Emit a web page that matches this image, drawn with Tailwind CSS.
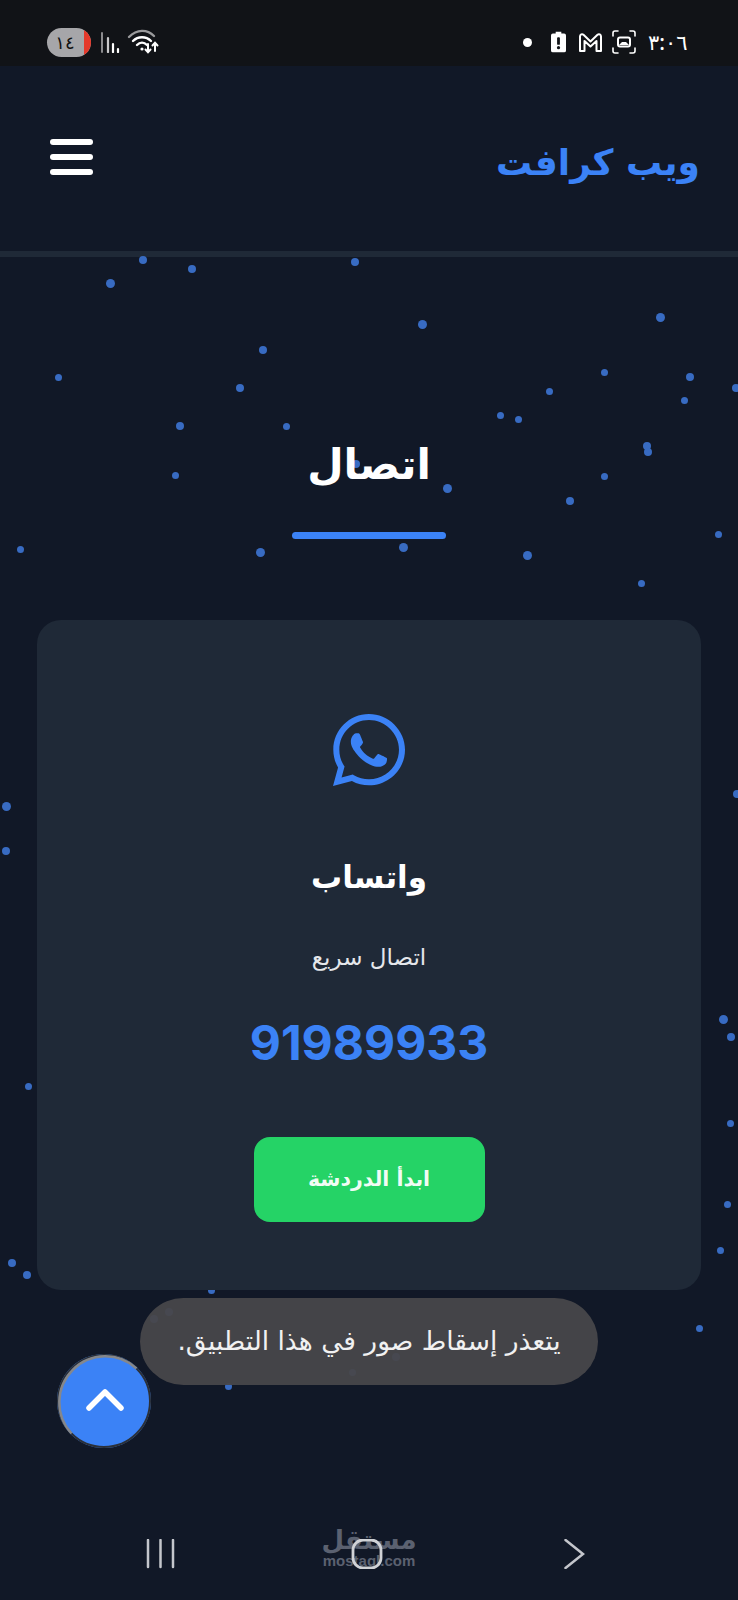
<!DOCTYPE html>
<html lang="ar" dir="rtl">
<head>
  <meta charset="UTF-8" />
  <meta name="viewport" content="width=device-width, initial-scale=1.0" />
  <title>ويب كرافت</title>
  <script src="https://cdn.jsdelivr.net/npm/@tailwindcss/browser@4"></script>
</head>
<body class="bg-[#111827] font-['DejaVu_Sans',sans-serif] text-white">
  <div class="relative w-[738px] h-[1600px] overflow-hidden flex flex-col">

    <!-- Status bar -->
    <div dir="ltr" class="h-[66px] shrink-0 bg-[#111317] flex items-center justify-between pl-[47px] pr-[48px] pt-[18px]">
      <div class="flex items-center">
        <div class="relative w-[44px] h-[29px] rounded-full bg-[#a6a6a9] overflow-hidden flex items-center justify-center pr-[8px]">
          <span class="text-[18px] leading-none text-[#111] font-['Noto_Sans','DejaVu_Sans',sans-serif]">١٤</span>
          <div class="absolute right-0 top-0 bottom-0 w-[7px] bg-[#e5392b]"></div>
        </div>
        <svg class="ml-[9px]" width="20" height="22" viewBox="0 0 20 22" fill="none" stroke-linecap="round">
          <path d="M2 2v19" stroke="#8b8b8e" stroke-width="2"/>
          <path d="M8 7v14" stroke="#c9c9cb" stroke-width="2.2"/>
          <path d="M13 13v8" stroke="#fff" stroke-width="2.2"/>
          <path d="M18 18v3" stroke="#fff" stroke-width="2.2"/>
        </svg>
        <svg class="ml-[7px]" width="34" height="26" viewBox="0 0 34 26" fill="none" stroke-linecap="round">
          <path d="M2 8C10 0 20 0 27 7" stroke="#9a9a9c" stroke-width="2.4"/>
          <path d="M6 12C11 7 19 7 24 12" stroke="#fff" stroke-width="2.4"/>
          <path d="M10 16C13 13 17 13 20 16" stroke="#fff" stroke-width="2.4"/>
          <circle cx="15" cy="20" r="1.6" fill="#fff"/>
          <path d="M21 15v8M18.5 20.5l2.5 2.8 2.5-2.8" stroke="#fff" stroke-width="2"/>
          <path d="M28 22v-8M25.5 16.5l2.5-2.8 2.5 2.8" stroke="#fff" stroke-width="2"/>
        </svg>
      </div>
      <div class="flex items-center">
        <div class="w-[9px] h-[9px] rounded-full bg-white"></div>
        <svg class="ml-[19px]" width="15" height="22" viewBox="0 0 16 22">
          <path d="M5 0h6v2h3a2 2 0 0 1 2 2v16a2 2 0 0 1-2 2H2a2 2 0 0 1-2-2V4a2 2 0 0 1 2-2h3z" fill="#fff"/>
          <rect x="6.5" y="6" width="3" height="8" rx="1" fill="#111317"/>
          <circle cx="8" cy="17" r="1.7" fill="#111317"/>
        </svg>
        <svg class="ml-[12px]" width="25" height="21" viewBox="0 0 25 21" fill="none">
          <path d="M2 19V4.500C2 2.500 4 1.500 5.500 2.800L12.500 9.500L19.500 2.800C21 1.500 23 2.500 23 4.500V19H18.500V9L12.500 14.500L6.500 9V19Z" stroke="#fff" stroke-width="2" stroke-linejoin="round"/>
        </svg>
        <svg class="ml-[9px]" width="24" height="24" viewBox="0 0 24 24" fill="none" stroke="#fff" stroke-linecap="round">
          <path d="M1 6V3a2 2 0 0 1 2-2h3M18 1h3a2 2 0 0 1 2 2v3M23 18v3a2 2 0 0 1-2 2h-3M6 23H3a2 2 0 0 1-2-2v-3" stroke-width="1.6"/>
          <rect x="6" y="7.500" width="12" height="9" rx="2" stroke-width="2"/>
          <path d="M7 15l3-3h4l3 3z" fill="#fff" stroke="none"/>
        </svg>
        <span class="ml-[12px] w-[42px] text-[21px] leading-none font-['Noto_Sans','DejaVu_Sans',sans-serif] font-medium">٣:٠٦</span>
      </div>
    </div>

    <!-- Header -->
    <header class="h-[191px] shrink-0 border-b-[6px] border-[#1f2937] flex items-center justify-between pr-[38px] pl-[50px] pb-[3px]">
      <a class="mt-[11px] text-[36px] leading-none font-bold text-[#3b82f6]">ويب كرافت</a>
      <div class="flex flex-col gap-[9px]">
        <span class="block w-[43px] h-[6px] rounded-full bg-white"></span>
        <span class="block w-[43px] h-[6px] rounded-full bg-white"></span>
        <span class="block w-[43px] h-[6px] rounded-full bg-white"></span>
      </div>
    </header>

    <!-- Floating particles sit behind the content -->
    <div id="particles" class="absolute inset-0"></div>

    <main class="relative flex-1 flex flex-col items-center pt-[178px]">
      <h1 class="text-[42px] leading-[60px] font-bold text-white">اتصال</h1>
      <div class="w-[154px] h-[7px] rounded-full bg-[#3b82f6] mt-[37px]"></div>

      <section class="mt-[81px] w-[664px] h-[670px] rounded-[24px] bg-[#1f2937] flex flex-col items-center pt-[94px]">
        <svg class="w-[72px] h-[72px]" viewBox="0 32 448 448" fill="#3b82f6">
          <path d="M380.9 97.1C339 55.1 283.2 32 223.9 32c-122.4 0-222 99.6-222 222 0 39.1 10.2 77.3 29.6 111L0 480l117.7-30.9c32.4 17.7 68.9 27 106.1 27h.1c122.3 0 224.1-99.6 224.1-222 0-59.3-25.2-115-67.1-157zm-157 341.6c-33.2 0-65.7-8.9-94-25.7l-6.7-4-69.8 18.3L72 359.2l-4.4-7c-18.5-29.4-28.2-63.3-28.2-98.2 0-101.7 82.8-184.5 184.6-184.5 49.3 0 95.6 19.2 130.4 54.1 34.8 34.9 56.2 81.2 56.1 130.5 0 101.8-84.9 184.6-186.6 184.6zm101.2-138.2c-5.5-2.8-32.8-16.2-37.9-18-5.1-1.9-8.8-2.8-12.5 2.8-3.7 5.6-14.3 18-17.6 21.8-3.2 3.7-6.5 4.2-12 1.4-32.6-16.3-54-29.1-75.5-66-5.7-9.8 5.7-9.1 16.3-30.3 1.8-3.7.9-6.9-.5-9.7-1.4-2.8-12.5-30.1-17.1-41.2-4.5-10.8-9.1-9.3-12.5-9.5-3.2-.2-6.9-.2-10.6-.2-3.7 0-9.7 1.4-14.8 6.9-5.1 5.6-19.4 19-19.4 46.3 0 27.3 19.9 53.7 22.6 57.4 2.8 3.7 39.1 59.7 94.8 83.8 35.2 15.2 49 16.5 66.6 13.9 10.7-1.6 32.8-13.4 37.4-26.4 4.6-13 4.6-24.1 3.2-26.4-1.3-2.5-5-3.9-10.5-6.6z"/>
        </svg>
        <h2 class="mt-[67px] text-[31px] leading-[48px] font-bold text-white">واتساب</h2>
        <p class="mt-[38px] text-[23px] leading-[36px] text-[#e5e7eb]">اتصال سريع</p>
        <p dir="ltr" class="mt-[38px] text-[48px] leading-[60px] font-bold text-[#3b82f6] font-['Inter',sans-serif]">91989933</p>
        <a class="mt-[64px] w-[231px] h-[85px] rounded-[16px] bg-[#25d366] flex items-center justify-center text-[20.5px] font-bold text-white/95">ابدأ الدردشة</a>
      </section>
    </main>

    <!-- Toast -->
    <div class="absolute left-[140px] top-[1298px] w-[458px] h-[87px] rounded-full bg-[#48474a]/95 flex items-center justify-center">
      <span class="text-[26.5px] leading-none text-[#f1f1f1]">يتعذر إسقاط صور في هذا التطبيق.</span>
    </div>

    <!-- Back to top -->
    <button class="absolute left-[57px] top-[1354px] w-[94px] h-[94px] rounded-full bg-[#3b82f6] flex items-center justify-center">
      <svg class="absolute inset-0" width="94" height="94" viewBox="0 0 94 94" fill="none">
        <circle cx="47" cy="47" r="46" stroke="#2b3038" stroke-width="2"/>
        <path d="M79.500 14.500A46 46 0 0 0 14.500 79.500" stroke="#85878b" stroke-width="2.500"/>
      </svg>
      <svg class="relative mb-[3px] ml-[2px]" width="38" height="24" viewBox="0 0 38 24" fill="none">
        <path d="M3 20L19 4L35 20" stroke="#fff" stroke-width="5.500" stroke-linecap="round" stroke-linejoin="round"/>
      </svg>
    </button>

    <!-- Watermark -->
    <div dir="ltr" class="absolute left-[323px] top-[1526px] w-[92px] flex flex-col items-center text-[#5b6170]">
      <span class="text-[26px] leading-[28px] font-bold">مستقل</span>
      <span class="text-[15px] leading-[14px] font-bold font-['Liberation_Sans',sans-serif]">mostaql.com</span>
    </div>

    <!-- Android nav bar -->
    <nav dir="ltr" class="absolute left-0 right-0 top-[1539px] h-[30px]">
      <svg class="absolute inset-0" width="738" height="30" viewBox="0 0 738 30" fill="none" stroke="#c4c6cc" stroke-linecap="round">
        <path d="M148 1v27M160.500 1v27M173 1v27" stroke-width="2.500"/>
        <rect x="353" y="1" width="28" height="28" rx="10" stroke="#d0d2d6" stroke-width="2.800"/>
        <path d="M565.500 1L583 15L565.500 29" stroke-width="2.500"/>
      </svg>
    </nav>
  </div>

  <script>
    // x, y, size of each particle
    const particles = [
      [143,260,8],[191.5,269,8],[355,262,8],[110.5,283,9],[422,324,9],[660,317,9],[262.6,350,8],
      [58,377,7],[240,388,8],[604,372,7],[690,377,8],[736,388,8],[549,391,7],[684,400,7],[500,415,7],
      [518,419,7],[180,426,8],[286.6,426,7],[646.6,446,8],[648,452,8],[356,464,8],[175.5,475,7],
      [604,476,7],[447.5,488,9],[570,501,8],[718,534,7],[20.7,549,7],[260.7,552,9],[403,547,9],
      [527.5,555,9],[641,583,7],[6,806,9],[6,851,8],[737,794,8],[723,1019,9],[731,1037,8],[28.6,1086,7],
      [730,1123,7],[727,1204,7],[720,1250,7],[12,1263,8],[26.5,1275,8],[699,1328,7],[211,1290,7],
      [154,1319,8],[168.5,1312,8],[395.5,1357,8],[352.6,1372,7],[228,1386,7]
    ];
    const box = document.getElementById("particles");
    particles.forEach(([x, y, size]) => {
      const dot = document.createElement("div");
      dot.className = "absolute rounded-full bg-[#386bc2]";
      dot.style.left = (x - size / 2) + "px";
      dot.style.top = (y - size / 2) + "px";
      dot.style.width = size + "px";
      dot.style.height = size + "px";
      box.appendChild(dot);
    });
  </script>
</body>
</html>
